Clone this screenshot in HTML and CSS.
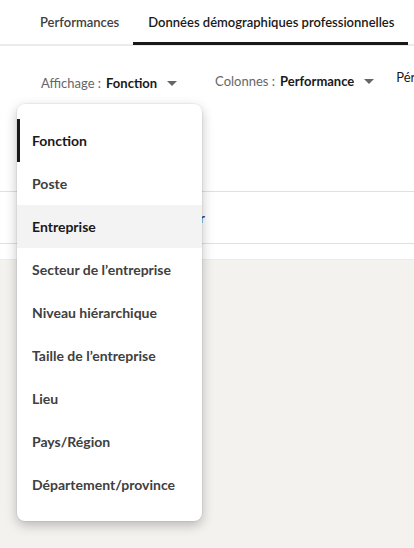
FILE: index.html
```html
<!DOCTYPE html>
<html lang="fr">
<head>
    <meta charset="UTF-8">
    <meta name="viewport" content="width=device-width, initial-scale=1.0">
    <title>Données démographiques</title>
    <link rel="stylesheet" href="styles.css">
</head>
<body>
    <div class="panel">
        <nav class="tabs">
            <a class="tab">Performances</a>
            <a class="tab active">Données démographiques professionnelles</a>
        </nav>

        <div class="filters">
            <button class="filter view">
                <span class="filter-label">Affichage :</span>
                <span class="filter-value">Fonction</span>
                <span class="caret"></span>
            </button>
            <button class="filter cols">
                <span class="filter-label">Colonnes :</span>
                <span class="filter-value">Performance</span>
                <span class="caret"></span>
            </button>
            <button class="filter period">
                <span class="period-value">Période</span>
            </button>
        </div>

        <div class="table-head"></div>
        <div class="table-row">
            <a class="link">Exporter</a>
        </div>
        <div class="table-foot"></div>
    </div>

    <ul class="menu">
        <li class="menu-item selected">Fonction</li>
        <li class="menu-item">Poste</li>
        <li class="menu-item hover">Entreprise</li>
        <li class="menu-item">Secteur de l’entreprise</li>
        <li class="menu-item">Niveau hiérarchique</li>
        <li class="menu-item">Taille de l’entreprise</li>
        <li class="menu-item">Lieu</li>
        <li class="menu-item">Pays/Région</li>
        <li class="menu-item">Département/province</li>
    </ul>
</body>
</html>
```

FILE: styles.css
```css
html, body {
    margin: 0;
    padding: 0;
}
body {
    font-family: Lato, "Open Sans", sans-serif;
    background-color: #f3f2ef;
    color: #191919;
    min-height: 548px;
    overflow: hidden;
    position: relative;
}
.panel {
    background: white;
}
.tabs {
    display: flex;
    height: 44px;
    border-bottom: 2px solid #ebebeb;
    padding-left: 25px;
}
.tab {
    display: flex;
    align-items: center;
    flex-shrink: 0;
    white-space: nowrap;
    padding: 0 14px 0 15px;
    font-size: 13px;
    font-weight: 600;
    color: #404040;
    position: relative;
}
.tab.active {
    color: #191919;
}
.tab.active::after {
    content: "";
    position: absolute;
    left: 0;
    right: 0;
    bottom: -1px;
    height: 3px;
    background: #191919;
}
.filters {
    display: flex;
    align-items: flex-start;
    height: 145px;
    padding-left: 41px;
    overflow: hidden;
}
.filter {
    display: flex;
    align-items: center;
    flex-shrink: 0;
    border: none;
    background: none;
    padding: 0;
    font-family: inherit;
    font-size: 13px;
    white-space: nowrap;
}
.filter.view {
    margin-top: 29px;
}
.filter.cols {
    margin-top: 27px;
    margin-left: 38px;
}
.filter.period {
    margin-top: 23px;
    margin-left: 22px;
}
.filter-label {
    color: #666;
    margin-right: 5px;
}
.filter-value {
    font-weight: 700;
    color: #191919;
}
.period-value {
    color: #191919;
}
.caret {
    width: 0;
    height: 0;
    border-left: 5px solid transparent;
    border-right: 5px solid transparent;
    border-top: 5px solid #666;
    margin-left: 10px;
}
.table-head {
    border-top: 1px solid #e0e0e0;
}
.table-row {
    height: 51px;
    display: flex;
    align-items: center;
    padding-left: 151px;
    border-bottom: 1px solid #e0e0e0;
}
.link {
    font-size: 14px;
    font-weight: 600;
    color: #3b1c6e;
    white-space: nowrap;
}
.table-foot {
    height: 15px;
    border-bottom: 1px solid #ececec;
}
.menu {
    position: absolute;
    left: 17px;
    top: 104px;
    width: 185px;
    margin: 0;
    padding: 15px 0;
    list-style: none;
    background: white;
    border-radius: 8px;
    box-shadow: 0 4px 12px rgba(0,0,0,0.25), 0 0 0 1px rgba(0,0,0,0.04);
}
.menu-item {
    height: 43px;
    display: flex;
    align-items: center;
    box-sizing: border-box;
    padding-left: 12px;
    font-size: 14px;
    font-weight: 700;
    color: #404040;
    border-left: 3px solid transparent;
}
.menu-item.selected {
    border-left-color: #191919;
    color: #191919;
}
.menu-item.hover {
    background: #f3f3f3;
    color: #191919;
}
```
